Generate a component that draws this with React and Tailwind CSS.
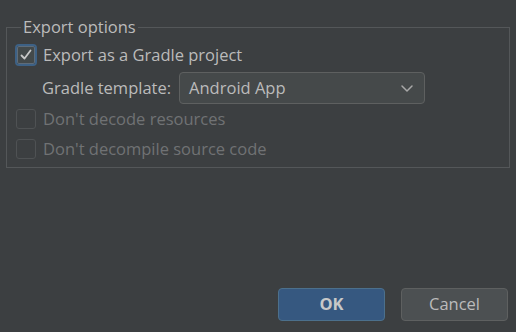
import React from "react";

const Checkbox = ({ checked, disabled }) => {
  if (checked) {
    return (
      <div className="w-[22px] h-[22px] rounded-[4px] border-2 border-[#3d6185] flex items-center justify-center">
        <div className="w-[18px] h-[18px] rounded-[2px] bg-[#43494a] border border-[#5e6c7a] flex items-center justify-center">
          <svg width="14" height="14" viewBox="0 0 14 14" fill="none">
            <path d="M2.5 7.5 L5.5 10.5 L11.5 2.5" stroke="#c8c8c8" strokeWidth="1.8" strokeLinecap="round" strokeLinejoin="round" />
          </svg>
        </div>
      </div>
    );
  }
  return (
    <div className="w-[22px] h-[22px] flex items-center justify-center">
      <div
        className={`w-[20px] h-[20px] rounded-[3px] border ${
          disabled ? "border-[#4f5254] bg-[#3c3f41]" : "border-[#6b6b6b] bg-[#43494a]"
        }`}
      />
    </div>
  );
};

const Row = ({ checked, disabled, label }) => (
  <div className="flex items-center h-[30px] gap-[6px]">
    <Checkbox checked={checked} disabled={disabled} />
    <span className={disabled ? "text-[#707274]" : "text-[#bbbbbb]"}>{label}</span>
  </div>
);

export default function App() {
  return (
    <div
      className="w-[516px] h-[332px] bg-[#3c3f41] flex flex-col text-[16.5px] text-[#bbbbbb]"
      style={{ fontFamily: '"Open Sans", "Noto Sans", sans-serif' }}
    >
      <fieldset className="mx-[6px] mt-[17px] h-[151px] border border-[#545759] pl-[8px] pr-[8px] pt-[3px]">
        <legend className="ml-[6px] px-[2px] leading-[20px] text-[#bbbbbb]">Export options</legend>
        <Row checked label="Export as a Gradle project" />
        <div className="flex items-center h-[32px] mt-[2px] pl-[27px] gap-[8px]">
          <span>Gradle template:</span>
          <div className="w-[246px] h-[32px] rounded-[4px] border border-[#5e6060] bg-[#45494a] flex items-center justify-between pl-[9px] pr-[10px]">
            <span className="text-[#bbbbbb]">Android App</span>
            <svg width="14" height="10" viewBox="0 0 14 10" fill="none">
              <path d="M2 3 L7 8 L12 3" stroke="#a8a8a8" strokeWidth="1.5" strokeLinecap="round" strokeLinejoin="round" />
            </svg>
          </div>
        </div>
        <Row disabled label="Don't decode resources" />
        <Row disabled label="Don't decompile source code" />
      </fieldset>
      <div className="mt-auto mb-[11px] mr-[8px] flex justify-end gap-[16px]">
        <button className="w-[107px] h-[33px] rounded-[4px] bg-[#365880] border border-[#4c708c] font-bold text-[#c8c8c8]">
          OK
        </button>
        <button className="w-[107px] h-[33px] rounded-[4px] bg-[#4c5052] border border-[#5e6060] text-[#bbbbbb]">
          Cancel
        </button>
      </div>
    </div>
  );
}
